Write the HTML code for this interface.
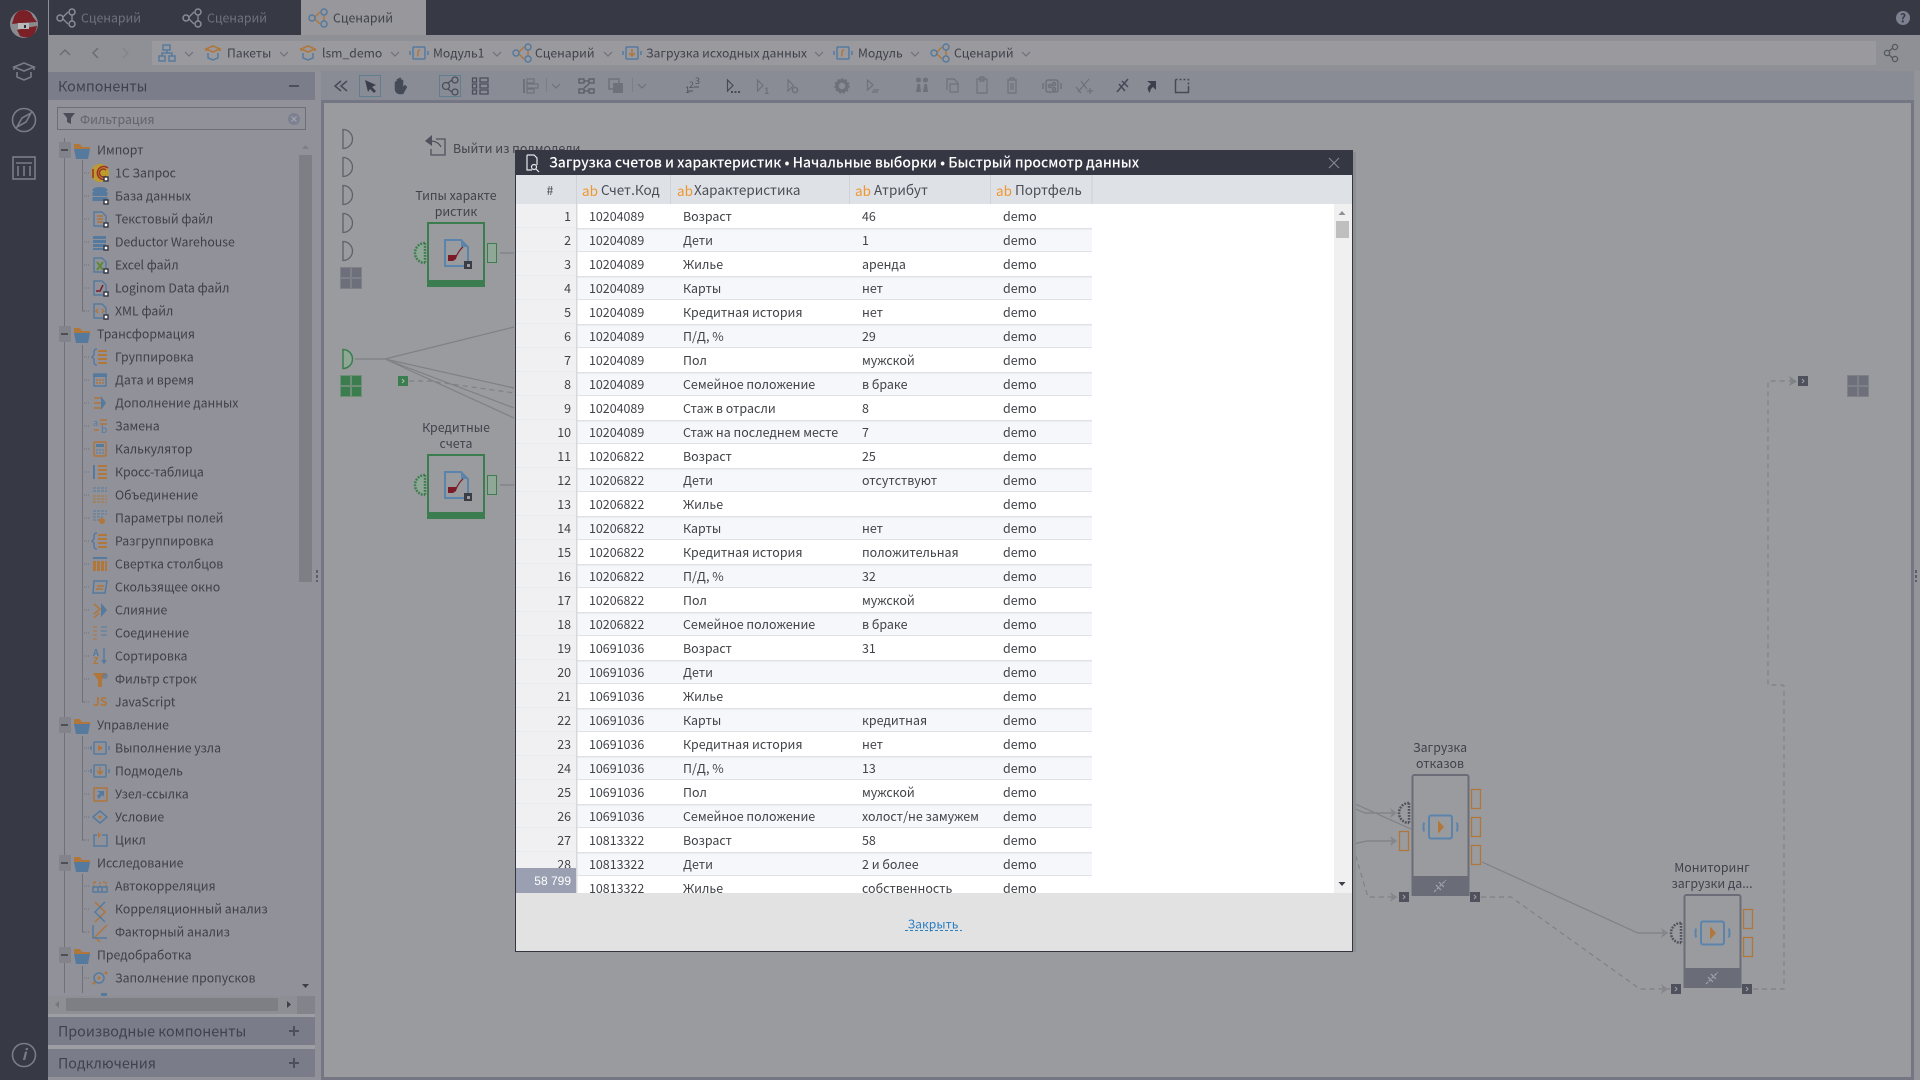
<!DOCTYPE html>
<html lang="ru"><head><meta charset="utf-8"><title>Сценарий</title>
<style>
html,body{margin:0;padding:0;width:1920px;height:1080px;overflow:hidden;background:#999b9f}
svg{display:block;position:absolute;left:0;top:0}
text{font-family:"Noto Sans CJK JP","Noto Sans CJK SC","Liberation Sans",sans-serif;font-size:12.4px;fill:#42444c}
.tab{font-size:12.3px;fill:#6f7280}
.bc{font-size:12.2px;fill:#3f414a}
.tree text{font-size:12.3px;fill:#3e4049}
.hd{font-size:14.3px;fill:#3f424e}
.tbl text{font-size:12.45px;fill:#414348}
.tbl .n{text-anchor:end}
.th{font-size:13.5px;fill:#4a4d55}
.ab{font-size:13.5px;fill:#f0962e}
.lb{font-size:12.35px;fill:#3f424c;text-anchor:middle}
.b{fill:none;stroke:#557a9e;stroke-width:1.5}
.o{fill:none;stroke:#b0763a;stroke-width:1.5}
.bf{fill:#557a9e}
.of{fill:#b0763a}
.dim{fill:none;stroke:#6f717a;stroke-width:1.5}
.dimf{fill:#6f717a}
.dk{fill:none;stroke:#454a57;stroke-width:1.5}
.lnk{fill:none;stroke:#7f8185;stroke-width:1.2}
.dsh{fill:none;stroke:#7f8185;stroke-width:1.2;stroke-dasharray:5 4}
</style></head><body>
<svg width="1920" height="1080" viewBox="0 0 1920 1080" xmlns="http://www.w3.org/2000/svg">
<defs>
<pattern id="rw" width="10" height="48" patternUnits="userSpaceOnUse" x="0" y="204"><rect width="10" height="24" fill="#fff"/><rect y="24" width="10" height="24" fill="#f6f7fa"/><rect y="24" width="10" height="1.5" fill="#dfe2e8"/><rect y="47" width="10" height="1.5" fill="#dfe2e8"/></pattern>
<pattern id="rn" width="10" height="24" patternUnits="userSpaceOnUse" x="0" y="204"><rect width="10" height="24" fill="#f0f0f2"/><rect y="23.5" width="10" height="1" fill="#dfe2e8"/></pattern>
<g id="sc"><path class="o" d="M-3-1 2-6M-3 1 2 6M6-3V3" stroke-width="1.3"/><circle cx="-6" cy="0" r="3" class="b"/><circle cx="6" cy="-6" r="3" class="b"/><circle cx="6" cy="6" r="3" class="b"/></g>
<g id="scg"><path d="M-3-1 2-6M-3 1 2 6M6-3V3" fill="none" stroke="#8a8d96" stroke-width="1.3"/><circle cx="-6" cy="0" r="3" fill="none" stroke="#8a8d96" stroke-width="1.5"/><circle cx="6" cy="-6" r="3" fill="none" stroke="#8a8d96" stroke-width="1.5"/><circle cx="6" cy="6" r="3" fill="none" stroke="#8a8d96" stroke-width="1.5"/></g>
<path id="chv" d="M-4-2 0 2 4-2" fill="none" stroke="#6f717a" stroke-width="1.2"/>
<g id="pk"><path class="o" d="M-7-4 0-7 7-4 0-1ZM-7-4-7-2M7-4 7-2"/><path class="b" d="M-5 0V5L0 7 5 5V0"/></g>
<g id="md"><rect x="-6" y="-6" width="12" height="12" rx="1" class="b"/><path class="o" d="M1-3Q-1-3-1 0T-2 3"/><path class="b" d="M-9-2V2M9-2V2"/></g>
<g id="sm"><rect x="-6" y="-6" width="12" height="12" rx="1" class="b"/><path class="o" d="M0-4V2M-3 0 0 3 3 0"/><path class="b" d="M-9-2V2M9-2V2"/></g>
<g id="fd"><path class="of" d="M-8-7H-2L0-4H8V-2H-8Z"/><path class="bf" d="M-8-2H8L6 8H-6Z"/></g>
<rect id="bd" x="4" y="4" width="4" height="4" fill="#fff" stroke="#3a3c46" stroke-width="1.5"/>
<g id="fl"><path class="b" d="M-6-7H2L6-3V7H-6Z"/></g>
<g id="exe"><rect x="-6" y="-6" width="12" height="12" rx="1" class="b"/><path class="of" d="M-2-3 3 0-2 3Z"/><path class="b" d="M-9-2V2M9-2V2"/></g>
<g id="lst"><path class="of" d="M-2-7H7V-5H-2ZM-2-3H7V-1H-2ZM-2 1H7V3H-2ZM-2 5H7V7H-2Z"/></g>
<g id="play"><rect x="-11" y="-11" width="23" height="23" rx="2" fill="none" stroke="#5b84ad" stroke-width="2"/><path d="M-2-6 4 0.5-2 7Z" fill="#b0763a"/><path d="M-16-4Q-17 .5-16 5M17-4Q18 .5 17 5" fill="none" stroke="#5b84ad" stroke-width="2"/></g>
<g id="ssq"><rect x="-5" y="-5" width="10" height="10" fill="#4f525d"/><path d="M-1-2 1 0-1 2" fill="none" stroke="#999b9f" stroke-width="1.2"/></g>
<g id="dna"><path d="M-6 6 6-6M-4-1 1 4M-1-4 4 1" fill="none" stroke="#a3a5ab" stroke-width="1.2" stroke-dasharray="3 1"/></g>
<g id="semi"><path d="M0-10A10 10 0 0 0 0 10M0-10V10" fill="none" stroke-width="2.5" stroke-dasharray="1.8 1.2"/></g>
<g id="doc"><path d="M-11-13H5L12-6V13H-11Z" fill="none" stroke="#5b84ad" stroke-width="2"/><path d="M5-13 12-6H5Z" fill="#5b84ad"/><path d="M-1 6Q3-3 7-6" fill="none" stroke="#7c1b28" stroke-width="1.2"/><path d="M-8 8V2H1L0 6-3 8Z" fill="#7c1b28"/><rect x="8" y="8" width="8" height="8" fill="#3a3c46"/><rect x="11" y="11" width="3" height="3" fill="#999b9f"/></g>
</defs>

<!-- base backgrounds -->
<rect width="1920" height="1080" fill="#8f9096"/>
<rect width="1920" height="35" fill="#373a44"/>
<rect width="48" height="1080" fill="#373a44"/>
<rect x="48" width="1" height="35" fill="#8f9096"/>
<rect x="301" width="125" height="35" fill="#97979c"/>
<use href="#scg" x="66" y="18"/><text class="tab" x="81" y="22.500">Сценарий</text>
<use href="#scg" x="192" y="18"/><text class="tab" x="207" y="22.500">Сценарий</text>
<use href="#sc" x="318" y="18"/><text class="tab" x="333" y="22.500" style="fill:#3f414a">Сценарий</text>
<circle cx="1903" cy="18" r="7" fill="#7d8090"/><text x="1903" y="22.500" text-anchor="middle" style="font-size:12px;fill:#373a44;font-weight:700">?</text>

<!-- rail -->
<circle cx="24" cy="24" r="14" fill="#8a8b8f"/>
<path d="M14 17Q17 10 24 10 31 11 33 17L37 22 21 23 12 24Z" fill="#7c2028"/>
<path d="M17 30Q24 28 37 26 36 34 30 37 24 38 20 36Z" fill="#7c2028"/>
<path d="M18 23H29V29H18Z" fill="#b9b9bb"/><rect x="24" y="25" width="2" height="3" fill="#30323a"/>
<g fill="none" stroke="#7a7d88" stroke-width="1.6"><path d="M14 67 24 63 34 67 24 71ZM14 67V70M34 67V70M17 72V77L24 80 31 77V72"/><circle cx="24" cy="120" r="11.500"/><path d="M31 113 26 122 17 127 22 118Z"/><rect x="13" y="157" width="22" height="22"/><path d="M16 163H32M18 166V176M24 166V176M30 166V176"/><circle cx="24" cy="1055" r="11.500"/></g>
<text x="24" y="1060" text-anchor="middle" style="font-size:15px;fill:#7a7d88;font-style:italic;font-weight:700">i</text>

<!-- breadcrumb -->
<rect x="48" y="35" width="1872" height="36" fill="#8f9095"/>
<rect x="152" y="41" width="1724" height="24" fill="#99999e"/>
<g fill="none" stroke="#6a6c75" stroke-width="1.5"><path d="M60 55 65 50 70 55M98 48 93 53 98 58"/><path d="M123 48 128 53 123 58" stroke="#83858b"/></g>
<g class="b"><rect x="163" y="45" width="7" height="5"/><rect x="159" y="56" width="6" height="5"/><rect x="169" y="56" width="6" height="5"/><path d="M167 50V53M162 56V53H172V56"/></g>
<use href="#chv" x="189" y="54"/>
<use href="#pk" x="213" y="53"/><text class="bc" x="227" y="57.500">Пакеты</text><use href="#chv" x="284" y="54"/>
<use href="#pk" x="308" y="53"/><text class="bc" x="322" y="57.500">lsm_demo</text><use href="#chv" x="395" y="54"/>
<use href="#md" x="419" y="53"/><text class="bc" x="433" y="57.500">Модуль1</text><use href="#chv" x="497" y="54"/>
<use href="#sc" x="522" y="53"/><text class="bc" x="535" y="57.500">Сценарий</text><use href="#chv" x="608" y="54"/>
<use href="#sm" x="632" y="53"/><text class="bc" x="646" y="57.500">Загрузка исходных данных</text><use href="#chv" x="819" y="54"/>
<use href="#md" x="843" y="53"/><text class="bc" x="858" y="57.500">Модуль</text><use href="#chv" x="915" y="54"/>
<use href="#sc" x="940" y="53"/><text class="bc" x="954" y="57.500">Сценарий</text><use href="#chv" x="1026" y="54"/>
<g fill="none" stroke="#55575f" stroke-width="1.3"><circle cx="1887" cy="53" r="2.600"/><circle cx="1895" cy="47" r="2.600"/><circle cx="1895" cy="59" r="2.600"/><path d="M1889 51 1893 48M1889 55 1893 58"/></g>

<!-- left panel -->
<rect x="48" y="72" width="267" height="1008" fill="#91919a"/>
<rect x="48" y="72" width="267" height="28" fill="#7b7e8a"/>
<text class="hd" x="58" y="91.500">Компоненты</text>
<rect x="289" y="85" width="10" height="2" fill="#4d505c"/>
<rect x="57.500" y="107.500" width="248" height="22" fill="#91919a" stroke="#6d6e76"/>
<path d="M63 113H75L71 118V124L67 122V118Z" fill="#4a4d58"/>
<text x="80" y="124" style="fill:#62646c">Фильтрация</text>
<circle cx="294" cy="119" r="6" fill="#7c8090"/><path d="M291.500 116.500 296.500 121.500M296.500 116.500 291.500 121.500" stroke="#a3a5ae" stroke-width="1.2"/>

<!-- tree -->
<g class="tree">
<path d="M64.500 138V993M82.500 160V311H85M82.500 345V702H85M82.500 736V840H85M82.500 874V932H85M82.500 966V993" fill="none" stroke="#6f7078"/>
<g fill="#82838b"><rect x="59" y="142" width="12" height="16" rx="1"/><rect x="59" y="326" width="12" height="16" rx="1"/><rect x="59" y="717" width="12" height="16" rx="1"/><rect x="59" y="855" width="12" height="16" rx="1"/><rect x="59" y="947" width="12" height="16" rx="1"/></g>
<g fill="#4e5058"><rect x="61" y="149" width="7" height="2"/><rect x="61" y="333" width="7" height="2"/><rect x="61" y="724" width="7" height="2"/><rect x="61" y="862" width="7" height="2"/><rect x="61" y="954" width="7" height="2"/></g>
<g fill="none" stroke="#6f7078" stroke-dasharray="1 1"><path d="M84 173H89M84 196H89M84 219H89M84 242H89M84 265H89M84 288H89M84 311H89M84 357H89M84 380H89M84 403H89M84 426H89M84 449H89M84 472H89M84 495H89M84 518H89M84 541H89M84 564H89M84 587H89M84 610H89M84 633H89M84 656H89M84 679H89M84 702H89M84 748H89M84 771H89M84 794H89M84 817H89M84 840H89M84 886H89M84 909H89M84 932H89M84 978H89"/></g>

<use href="#fd" x="82" y="151"/><text x="97" y="154.500">Импорт</text>
<circle cx="100" cy="173" r="9" fill="#bd9b2e"/><path d="M93 169V178M106 170A4 4 0 1 0 106 176M108 168A6.500 6.500 0 1 0 108 178" fill="none" stroke="#9c2f28" stroke-width="1.5"/><use href="#bd" x="100" y="173"/><text x="115" y="177.500">1С Запрос</text>
<g class="bf"><ellipse cx="100" cy="190" rx="7.500" ry="3"/><rect x="92.500" y="192" width="15" height="4"/><rect x="92.500" y="197" width="15" height="4"/></g><use href="#bd" x="100" y="196"/><text x="115" y="200.500">База данных</text>
<use href="#fl" x="100" y="219"/><path class="o" d="M97 216H103M97 219H103M97 222H103"/><use href="#bd" x="100" y="219"/><text x="115" y="223.500">Текстовый файл</text>
<g class="bf"><rect x="93" y="236" width="13" height="3"/><rect x="93" y="240" width="13" height="3"/><rect x="93" y="244" width="13" height="3"/><rect x="93" y="248" width="13" height="2"/></g><use href="#bd" x="100" y="242"/><text x="115" y="246.500">Deductor Warehouse</text>
<use href="#fl" x="100" y="265"/><path d="M97 262 103 270M103 262 97 270" stroke="#5d8a3a" stroke-width="2"/><use href="#bd" x="100" y="265"/><text x="115" y="269.500">Excel файл</text>
<use href="#fl" x="100" y="288"/><path d="M96 291H100L103 285" fill="none" stroke="#7c1b28" stroke-width="1.500"/><use href="#bd" x="100" y="288"/><text x="115" y="292.500">Loginom Data файл</text>
<use href="#fl" x="100" y="311"/><path class="o" d="M98 309 96 311 98 313M102 309 104 311 102 313"/><use href="#bd" x="100" y="311"/><text x="115" y="315.500">XML файл</text>

<use href="#fd" x="82" y="335"/><text x="97" y="338.500">Трансформация</text>
<path class="b" d="M97 349Q94 349 94 352V355L92 357 94 359V362Q94 365 97 365"/><use href="#lst" x="100" y="357"/><text x="115" y="361.500">Группировка</text>
<rect x="94" y="374" width="12" height="12" class="b"/><path class="bf" d="M93 374H107V377H93Z"/><path class="o" d="M96 380H98M99 380H101M102 380H104M96 383H98M99 383H101M102 383H104"/><text x="115" y="384.500">Дата и время</text>
<path class="o" d="M94 398H101M94 403H101M94 408H101"/><path class="bf" d="M101 396 106 403 101 410Z"/><text x="115" y="407.500">Дополнение данных</text>
<text x="93" y="426" style="font-size:9px;fill:#557a9e">a</text><text x="101" y="433" style="font-size:10px;fill:#557a9e">b</text><path class="o" d="M100 420H107M100 424H107M94 430H99"/><text x="115" y="430.500">Замена</text>
<rect x="94" y="442" width="12" height="14" rx="1" class="o"/><path class="bf" d="M96 444H104V447H96Z"/><path d="M96 450H104M96 453H104" stroke="#557a9e" stroke-dasharray="2 1"/><text x="115" y="453.500">Калькулятор</text>
<rect x="93" y="465" width="2" height="14" class="bf"/><use href="#lst" x="100" y="472"/><text x="115" y="476.500">Кросс-таблица</text>
<path d="M93 488H107M93 491H107" stroke="#557a9e" stroke-dasharray="3 1" fill="none"/><path d="M93 496H107M93 499H107M93 502H107" stroke="#b0763a" stroke-dasharray="3 1" fill="none"/><text x="115" y="499.500">Объединение</text>
<path d="M93 511H107M93 514H107M93 517H103M93 520H103" stroke="#557a9e" stroke-dasharray="3 1" fill="none"/><circle cx="102" cy="521" r="3" class="of"/><text x="115" y="522.500">Параметры полей</text>
<path class="b" d="M97 533Q94 533 94 536V539L92 541 94 543V546Q94 549 97 549"/><use href="#lst" x="100" y="541"/><text x="115" y="545.500">Разгруппировка</text>
<rect x="93" y="557" width="14" height="2" class="bf"/><path class="of" d="M93 561H96V571H93ZM97 561H100V571H97ZM101 561H104V571H101ZM105 561H107V571H105Z"/><text x="115" y="568.500">Свертка столбцов</text>
<path class="b" d="M94 581H107L105 593H93Z"/><path class="o" d="M97 586H104M96 589H103"/><text x="115" y="591.500">Скользящее окно</text>
<path class="o" d="M94 604 100 609 94 614M94 618 99 613"/><path class="bf" d="M101 603 107 610 101 617Z"/><text x="115" y="614.500">Слияние</text>
<path d="M93 627H97M93 631H97M93 635H97M93 639H97" stroke="#b0763a" fill="none"/><path d="M101 627H107M101 631H107M101 635H107" stroke="#557a9e" fill="none"/><text x="115" y="637.500">Соединение</text>
<text x="93" y="656" style="font-size:9px;font-weight:700;fill:#557a9e">A</text><text x="93" y="664" style="font-size:9px;font-weight:700;fill:#b0763a">Z</text><path class="b" d="M104 648V662M102 660 104 663 106 660"/><text x="115" y="660.500">Сортировка</text>
<path class="of" d="M93 673H107L102 680V687H98V680Z"/><circle cx="105" cy="676" r="3" class="bf" fill-opacity=".6"/><text x="115" y="683.500">Фильтр строк</text>
<text x="93" y="706" style="font-size:12px;font-weight:700;fill:#b0763a">JS</text><text x="115" y="706.500">JavaScript</text>

<use href="#fd" x="82" y="726"/><text x="97" y="729.500">Управление</text>
<use href="#exe" x="100" y="748"/><text x="115" y="752.500">Выполнение узла</text>
<use href="#sm" x="100" y="771"/><text x="115" y="775.500">Подмодель</text>
<rect x="94" y="788" width="13" height="13" class="o"/><path class="bf" d="M97 791H104V797L102 795 99 799 97 796 100 793Z"/><text x="115" y="798.500">Узел-ссылка</text>
<path class="b" d="M93 817 100 811 107 817 100 823Z"/><circle cx="100" cy="817" r="1.500" class="of"/><text x="115" y="821.500">Условие</text>
<path class="b" d="M102 835H107V846H94V835H97"/><path class="of" d="M98 832 101 835 98 838Z"/><text x="115" y="844.500">Цикл</text>

<use href="#fd" x="82" y="864"/><text x="97" y="867.500">Исследование</text>
<path class="o" d="M94 882V888M94 882H97M100 882V888M103 882H106V888" stroke-dasharray="2 1"/><path class="b" d="M93 887H107V892H93ZM98 887V892M102 887V892"/><text x="115" y="890.500">Автокорреляция</text>
<path class="o" d="M95 902 105 912 95 922" stroke-width="2.500"/><path class="b" d="M105 902 95 912 105 922" stroke-width="2.500"/><text x="115" y="913.500">Корреляционный анализ</text>
<path class="o" d="M107 925 95 937 100 942"/><path class="b" d="M93 925V938H107" stroke-width="2"/><text x="115" y="936.500">Факторный анализ</text>

<use href="#fd" x="82" y="956"/><text x="97" y="959.500">Предобработка</text>
<circle cx="99" cy="978" r="5" class="b"/><circle cx="99" cy="978" r="1.500" class="of"/><circle cx="106" cy="973" r="1.500" class="of"/><circle cx="94" cy="983" r="1.500" class="of"/><text x="115" y="982.500">Заполнение пропусков</text>
<rect x="101" y="993" width="6" height="3" class="bf"/>
</g>

<!-- panel scrollbars -->
<rect x="299" y="155" width="13" height="427" fill="#7e7f84"/>
<path d="M302 149 305.500 145 309 149Z" fill="#7e7f84"/>
<path d="M302 984H309L305.500 988Z" fill="#3e4048"/>
<rect x="48" y="996" width="267" height="18" fill="#8e8e95"/>
<rect x="66" y="998" width="212" height="13" fill="#7e7f84"/>
<path d="M59 1001V1008L55 1004.500Z" fill="#76777d"/><path d="M287 1001V1008L291 1004.500Z" fill="#3e4048"/>
<rect x="297" y="996" width="18" height="18" fill="#83848b"/>
<rect x="48" y="1014" width="267" height="3" fill="#9d9da4"/>
<rect x="48" y="1017" width="267" height="28" fill="#7a7d89"/>
<rect x="48" y="1045" width="267" height="4" fill="#9d9da4"/>
<rect x="48" y="1049" width="267" height="28" fill="#7a7d89"/>
<text class="hd" x="58" y="1036.500">Производные компоненты</text>
<text class="hd" x="58" y="1068.500">Подключения</text>
<path d="M294 1026V1036M289 1031H299M294 1058V1068M289 1063H299" stroke="#4d505c" stroke-width="2"/>

<!-- splitter + canvas -->
<rect x="315" y="71" width="6" height="1009" fill="#91919a"/>
<path d="M317 570V573M317 575V578M317 580V582" stroke="#4a4c54" stroke-width="1.5"/>
<rect x="321" y="71" width="1593" height="29" fill="#8a8c95"/>
<rect x="321" y="100" width="1593" height="980" fill="#747683"/>
<rect x="324" y="103" width="1587" height="974" fill="#999b9f"/>
<rect x="1914" y="71" width="6" height="1009" fill="#93939a"/>
<path d="M1916 570V573M1916 575V578M1916 580V582" stroke="#4a4c54" stroke-width="1.5"/>

<!-- toolbar -->
<path d="M341 81 335 86 341 91M347 81 341 86 347 91" fill="none" stroke="#454a57" stroke-width="1.500"/>
<rect x="359.500" y="75.500" width="21" height="21" fill="none" stroke="#5f7f8f"/>
<path d="M365 80 376 85 372 87 376 91 374 93 370 89 368 92Z" fill="#3b3f4b"/>
<path d="M395 82V90Q396 94 400 94H403L407 87 405 85 403 87V80H401V85 78H399V85 79H397V85 81Z" fill="#454a57" stroke="#454a57" stroke-width=".5"/>
<rect x="439.500" y="75.500" width="21" height="21" fill="none" stroke="#5f7f8f"/>
<g fill="none" stroke="#4a4e5b" stroke-width="1.300"><circle cx="446" cy="86" r="3.500"/><circle cx="455" cy="80" r="3"/><circle cx="455" cy="92" r="3"/><path d="M448 83 452 80M448 89 452 92"/><path d="M472.500 79h4v4h-4zM472.500 85h4v4h-4zM472.500 91h4v4h-4zM480 79h8v4h-8zM480 85h8v4h-8zM480 91h8v4h-8z" transform="translate(0 -1)"/></g>
<rect x="523" y="79" width="2" height="14" class="dimf"/><rect x="527" y="79" width="7" height="4" class="dim" style="stroke-width:1.2"/><rect x="527" y="84" width="11" height="4" class="dim" style="stroke-width:1.2"/><rect x="527" y="89" width="7" height="4" class="dim" style="stroke-width:1.2"/>
<path d="M546.500 78V92M632.500 78V92" stroke="#7c7e87"/><use href="#chv" x="556" y="86"/><use href="#chv" x="642" y="86"/>
<g fill="none" stroke="#585b66" stroke-width="1.300"><rect x="579" y="79" width="5" height="4"/><rect x="589" y="79" width="5" height="4"/><rect x="579" y="89" width="5" height="4"/><rect x="589" y="89" width="5" height="4"/><path d="M584 81H589M584 91H589M589 84 584 88"/></g>
<rect x="609" y="79" width="10" height="10" fill="none" stroke="#6f717a" stroke-width="1.500"/><rect x="613" y="83" width="10" height="10" fill="#6f717a"/>
<text x="685" y="93" style="font-size:9px;fill:#50535e">1</text><text x="689" y="88" style="font-size:9px;fill:#50535e">2</text><text x="695" y="84" style="font-size:9px;fill:#50535e">3</text>
<path d="M688 91H693M694 87H699" stroke="#50535e" fill="none"/>
<path d="M727.500 80V91L733 85.500Z" fill="none" stroke="#474a56" stroke-width="1.200"/><path d="M731 91h2v2h-2zM734.500 91h2v2h-2zM738 91h2v2h-2z" fill="#474a56"/>
<path d="M757.500 80V91L763 85.500Z" fill="none" stroke="#6f717a" stroke-width="1.200"/><text x="764" y="94" style="font-size:9px;font-weight:700;fill:#6f717a">1</text>
<path d="M788 80V91L793.500 85.500Z" fill="none" stroke="#6f717a" stroke-width="1.200"/><circle cx="795" cy="90" r="2.600" class="dim"/>
<circle cx="842" cy="86" r="5" fill="none" stroke="#6f717a" stroke-width="3.500"/><circle cx="842" cy="86" r="7" fill="none" stroke="#6f717a" stroke-width="1.500" stroke-dasharray="2 2"/>
<path d="M867.500 80V90L873 85ZM873 90H879M872 92H878" fill="none" stroke="#6f717a" stroke-width="1.200"/>
<g class="dimf"><circle cx="918.500" cy="80" r="2.500"/><circle cx="925.500" cy="80" r="2.500"/><path d="M916 92 917.500 84H920L921 92ZM923 92 924.500 84H927L928 92Z"/></g>
<path d="M947 90V79H954L958 83V92H950V84H958" fill="none" stroke="#6f717a" stroke-width="1.200"/>
<path d="M977 79H987V93H977ZM980 77H984V81H980Z" fill="none" stroke="#6f717a" stroke-width="1.200"/>
<path d="M1007 80H1017M1010 80V78H1014V80M1008 80V93H1016V80M1011 83V90M1013 83V90" fill="none" stroke="#6f717a" stroke-width="1.200"/>
<rect x="1046" y="80" width="12" height="12" rx="2" class="dim"/><path d="M1043 83V89M1061 83V89" class="dim"/><circle cx="1050" cy="86" r="1.500" class="dim"/><circle cx="1054" cy="84" r="1.500" class="dim"/><circle cx="1054" cy="89" r="1.500" class="dim"/>
<path d="M1078 92 1089 79M1081 81 1087 89M1076 87 1081 93M1087 91H1093M1090 88V94" fill="none" stroke="#6f717a" stroke-width="1.200"/>
<path d="M1117 92 1128 79M1119 84 1125 91M1122 81 1128 87" class="dk"/>
<path d="M1147 81H1156V90L1153 87Q1150 89 1150 93 1145 88 1151 84Z" fill="#3d404c"/>
<path d="M1175.500 79.500V92.500H1188.500V86" class="dk"/><path d="M1175.500 79.500H1188.500V86" fill="none" stroke="#454a57" stroke-width="1.500" stroke-dasharray="2 2"/>

<!-- canvas left -->
<g fill="none" stroke="#5f616a" stroke-width="1.300"><path d="M343 129.500A9.500 9.500 0 0 1 343 148.500ZM343 157.500A9.500 9.500 0 0 1 343 176.500ZM343 185.500A9.500 9.500 0 0 1 343 204.500ZM343 213.500A9.500 9.500 0 0 1 343 232.500ZM343 241.500A9.500 9.500 0 0 1 343 260.500Z"/></g>
<g fill="#6d6f7b" stroke="#7f8189"><rect x="340.500" y="267.500" width="10" height="10"/><rect x="351.500" y="267.500" width="10" height="10"/><rect x="340.500" y="278.500" width="10" height="10"/><rect x="351.500" y="278.500" width="10" height="10"/></g>
<path d="M343 349.500A9.500 9.500 0 0 1 343 368.500Z" fill="#8ea895" stroke="#3b7d4e" stroke-width="1.500"/>
<g fill="#3b7d4e" stroke="#6f8f78"><rect x="340.500" y="375.500" width="10" height="10"/><rect x="351.500" y="375.500" width="10" height="10"/><rect x="340.500" y="386.500" width="10" height="10"/><rect x="351.500" y="386.500" width="10" height="10"/></g>
<rect x="398" y="376" width="10" height="10" fill="#3b7d4e"/><path d="M402 379 404 381 402 383" fill="none" stroke="#9fb8a6" stroke-width="1.200"/>
<path class="lnk" d="M355 359H385L514 327M385 359 514 388M385 359 514 408M385 359 514 418"/>
<path class="dsh" d="M409 381H430L514 393"/>
<path class="lnk" d="M500 253H514M500 485H514"/>
<path d="M425 141 432 135V146Z" fill="#4f525d"/><path d="M430 141Q438 141 441 147" fill="none" stroke="#4f525d" stroke-width="1.300"/><path d="M436 139H445V155H431V149" fill="none" stroke="#4f525d" stroke-width="1.300"/>
<text x="453" y="153" style="fill:#41434c">Выйти из подмодели</text>

<text class="lb" x="456" y="200">Типы характе</text><text class="lb" x="456" y="216">ристик</text>
<rect x="428" y="223" width="56" height="63" fill="#999b9f" stroke="#3b7d4e" stroke-width="2"/><rect x="427" y="280" width="58" height="7" fill="#3b7d4e"/>
<use href="#doc" x="456" y="253"/>
<path d="M424 244A9 9 0 0 0 424 262Z" fill="#8ea895"/><use href="#semi" x="425" y="253" stroke="#3b7d4e"/>
<rect x="487.500" y="243.500" width="9" height="19" fill="#8ea895" stroke="#3b7d4e"/>

<text class="lb" x="456" y="432">Кредитные</text><text class="lb" x="456" y="448">счета</text>
<rect x="428" y="455" width="56" height="63" fill="#999b9f" stroke="#3b7d4e" stroke-width="2"/><rect x="427" y="512" width="58" height="7" fill="#3b7d4e"/>
<use href="#doc" x="456" y="485"/>
<path d="M424 476A9 9 0 0 0 424 494Z" fill="#8ea895"/><use href="#semi" x="425" y="485" stroke="#3b7d4e"/>
<rect x="487.500" y="475.500" width="9" height="19" fill="#8ea895" stroke="#3b7d4e"/>

<!-- canvas right -->
<path class="dsh" d="M1753 989H1784V686L1783 685H1768V381H1792"/>
<path d="M1789 376 1797 381.500 1789 386 1791 381.500Z" fill="#7f8185"/>
<use href="#ssq" x="1803" y="381"/>
<g fill="#6d6f7b" stroke="#7f8189"><rect x="1847.500" y="375.500" width="10" height="10"/><rect x="1858.500" y="375.500" width="10" height="10"/><rect x="1847.500" y="386.500" width="10" height="10"/><rect x="1858.500" y="386.500" width="10" height="10"/></g>

<path class="lnk" d="M1353 803 1411 829M1482 862 1638 933H1668M1353 808 1365 813H1395M1353 844 1367 841H1395"/>
<path class="dsh" d="M1353 847 1368 897H1397M1481 897H1511L1640 989H1670"/>
<g fill="#84868a"><path d="M1390 808 1397 813 1390 818 1392 813ZM1390 836 1397 841 1390 846 1392 841ZM1390 892 1397 897 1390 902 1392 897ZM1661 928 1668 933 1661 938 1663 933ZM1661 984 1668 989 1661 994 1663 989Z"/></g>

<text class="lb" x="1440" y="752">Загрузка</text><text class="lb" x="1440" y="768">отказов</text>
<rect x="1412.500" y="775" width="56" height="120" rx="2" fill="#999b9f" stroke="#6a6c78" stroke-width="2"/>
<rect x="1411.500" y="876" width="58" height="20" fill="#6a6c78"/><use href="#dna" x="1440" y="886"/>
<use href="#play" x="1440" y="826.500"/>
<use href="#semi" x="1409" y="813" stroke="#50525c"/>
<g fill="none" stroke="#b0763a" stroke-width="1.300"><rect x="1399.500" y="831.500" width="9" height="19"/><rect x="1471.500" y="789.500" width="9" height="19"/><rect x="1471.500" y="817.500" width="9" height="19"/><rect x="1471.500" y="845.500" width="9" height="19"/></g>
<use href="#ssq" x="1404" y="897"/><use href="#ssq" x="1475" y="897"/>

<text class="lb" x="1712" y="872">Мониторинг</text><text class="lb" x="1712" y="888">загрузки да...</text>
<rect x="1684.500" y="895" width="56" height="92" rx="2" fill="#999b9f" stroke="#6a6c78" stroke-width="2"/>
<rect x="1683.500" y="968" width="58" height="20" fill="#6a6c78"/><use href="#dna" x="1712" y="978"/>
<use href="#play" x="1712" y="932.500"/>
<use href="#semi" x="1681" y="933" stroke="#50525c"/>
<g fill="none" stroke="#b0763a" stroke-width="1.300"><rect x="1743.500" y="909.500" width="9" height="19"/><rect x="1743.500" y="937.500" width="9" height="19"/></g>
<use href="#ssq" x="1676" y="989"/><use href="#ssq" x="1747" y="989"/>

<!-- modal -->
<rect x="515" y="150" width="838" height="802" fill="#33363f"/>
<rect x="1353" y="152" width="3" height="800" fill="#8d8f94"/>
<rect x="516" y="175" width="836" height="776" fill="#fff"/>
<rect x="515" y="150" width="838" height="25" fill="#353843"/>
<path d="M527 155H534L537 158V165M527 155V170H532" fill="none" stroke="#e8e8ea" stroke-width="1.200"/><circle cx="534" cy="167" r="2.500" fill="none" stroke="#e8e8ea" stroke-width="1.200"/><path d="M536 169 539 172" stroke="#e8e8ea" stroke-width="1.200"/>
<text x="549" y="167.500" style="font-size:14px;font-weight:500;fill:#fff">Загрузка счетов и характеристик • Начальные выборки • Быстрый просмотр данных</text>
<path d="M1329 158 1339 168M1339 158 1329 168" stroke="#8a8c95" stroke-width="1"/>

<rect x="516" y="175" width="836" height="29" fill="#dee1e6"/>
<path d="M576.500 175V204M670.500 175V204M849.500 175V204M990.500 175V204M1092 175V204" stroke="#cfd2d8"/>
<text x="550" y="195" text-anchor="middle" style="fill:#4a4d55">#</text>
<text class="ab" x="582" y="196">ab</text><text class="th" x="601" y="195">Счет.Код</text>
<text class="ab" x="677" y="196">ab</text><text class="th" x="694" y="195">Характеристика</text>
<text class="ab" x="855" y="196">ab</text><text class="th" x="874" y="195">Атрибут</text>
<text class="ab" x="996" y="196">ab</text><text class="th" x="1015" y="195">Портфель</text>

<rect x="516" y="204" width="60" height="689" fill="url(#rn)"/>
<rect x="576" y="204" width="516" height="689" fill="url(#rw)"/>
<rect x="576" y="204" width="1.500" height="689" fill="#d5d8de"/>
<rect x="1334" y="204" width="18" height="689" fill="#f0f0f0"/>
<rect x="1336" y="221" width="13" height="17" fill="#bfbfbf"/>
<path d="M1338.500 215 1342 211 1345.500 215Z" fill="#8f9095"/>
<path d="M1338.500 882H1345.500L1342 886Z" fill="#3e4048"/>

<g class="tbl">
<text class="n" x="571" y="221">1</text><text x="589" y="221">10204089</text><text x="683" y="221">Возраст</text><text x="862" y="221">46</text><text x="1003" y="221">demo</text>
<text class="n" x="571" y="245">2</text><text x="589" y="245">10204089</text><text x="683" y="245">Дети</text><text x="862" y="245">1</text><text x="1003" y="245">demo</text>
<text class="n" x="571" y="269">3</text><text x="589" y="269">10204089</text><text x="683" y="269">Жилье</text><text x="862" y="269">аренда</text><text x="1003" y="269">demo</text>
<text class="n" x="571" y="293">4</text><text x="589" y="293">10204089</text><text x="683" y="293">Карты</text><text x="862" y="293">нет</text><text x="1003" y="293">demo</text>
<text class="n" x="571" y="317">5</text><text x="589" y="317">10204089</text><text x="683" y="317">Кредитная история</text><text x="862" y="317">нет</text><text x="1003" y="317">demo</text>
<text class="n" x="571" y="341">6</text><text x="589" y="341">10204089</text><text x="683" y="341">П/Д, %</text><text x="862" y="341">29</text><text x="1003" y="341">demo</text>
<text class="n" x="571" y="365">7</text><text x="589" y="365">10204089</text><text x="683" y="365">Пол</text><text x="862" y="365">мужской</text><text x="1003" y="365">demo</text>
<text class="n" x="571" y="389">8</text><text x="589" y="389">10204089</text><text x="683" y="389">Семейное положение</text><text x="862" y="389">в браке</text><text x="1003" y="389">demo</text>
<text class="n" x="571" y="413">9</text><text x="589" y="413">10204089</text><text x="683" y="413">Стаж в отрасли</text><text x="862" y="413">8</text><text x="1003" y="413">demo</text>
<text class="n" x="571" y="437">10</text><text x="589" y="437">10204089</text><text x="683" y="437">Стаж на последнем месте</text><text x="862" y="437">7</text><text x="1003" y="437">demo</text>
<text class="n" x="571" y="461">11</text><text x="589" y="461">10206822</text><text x="683" y="461">Возраст</text><text x="862" y="461">25</text><text x="1003" y="461">demo</text>
<text class="n" x="571" y="485">12</text><text x="589" y="485">10206822</text><text x="683" y="485">Дети</text><text x="862" y="485">отсутствуют</text><text x="1003" y="485">demo</text>
<text class="n" x="571" y="509">13</text><text x="589" y="509">10206822</text><text x="683" y="509">Жилье</text><text x="1003" y="509">demo</text>
<text class="n" x="571" y="533">14</text><text x="589" y="533">10206822</text><text x="683" y="533">Карты</text><text x="862" y="533">нет</text><text x="1003" y="533">demo</text>
<text class="n" x="571" y="557">15</text><text x="589" y="557">10206822</text><text x="683" y="557">Кредитная история</text><text x="862" y="557">положительная</text><text x="1003" y="557">demo</text>
<text class="n" x="571" y="581">16</text><text x="589" y="581">10206822</text><text x="683" y="581">П/Д, %</text><text x="862" y="581">32</text><text x="1003" y="581">demo</text>
<text class="n" x="571" y="605">17</text><text x="589" y="605">10206822</text><text x="683" y="605">Пол</text><text x="862" y="605">мужской</text><text x="1003" y="605">demo</text>
<text class="n" x="571" y="629">18</text><text x="589" y="629">10206822</text><text x="683" y="629">Семейное положение</text><text x="862" y="629">в браке</text><text x="1003" y="629">demo</text>
<text class="n" x="571" y="653">19</text><text x="589" y="653">10691036</text><text x="683" y="653">Возраст</text><text x="862" y="653">31</text><text x="1003" y="653">demo</text>
<text class="n" x="571" y="677">20</text><text x="589" y="677">10691036</text><text x="683" y="677">Дети</text><text x="1003" y="677">demo</text>
<text class="n" x="571" y="701">21</text><text x="589" y="701">10691036</text><text x="683" y="701">Жилье</text><text x="1003" y="701">demo</text>
<text class="n" x="571" y="725">22</text><text x="589" y="725">10691036</text><text x="683" y="725">Карты</text><text x="862" y="725">кредитная</text><text x="1003" y="725">demo</text>
<text class="n" x="571" y="749">23</text><text x="589" y="749">10691036</text><text x="683" y="749">Кредитная история</text><text x="862" y="749">нет</text><text x="1003" y="749">demo</text>
<text class="n" x="571" y="773">24</text><text x="589" y="773">10691036</text><text x="683" y="773">П/Д, %</text><text x="862" y="773">13</text><text x="1003" y="773">demo</text>
<text class="n" x="571" y="797">25</text><text x="589" y="797">10691036</text><text x="683" y="797">Пол</text><text x="862" y="797">мужской</text><text x="1003" y="797">demo</text>
<text class="n" x="571" y="821">26</text><text x="589" y="821">10691036</text><text x="683" y="821">Семейное положение</text><text x="862" y="821">холост/не замужем</text><text x="1003" y="821">demo</text>
<text class="n" x="571" y="845">27</text><text x="589" y="845">10813322</text><text x="683" y="845">Возраст</text><text x="862" y="845">58</text><text x="1003" y="845">demo</text>
<text class="n" x="571" y="869">28</text><text x="589" y="869">10813322</text><text x="683" y="869">Дети</text><text x="862" y="869">2 и более</text><text x="1003" y="869">demo</text>
<text x="589" y="893">10813322</text><text x="683" y="893">Жилье</text><text x="862" y="893">собственность</text><text x="1003" y="893">demo</text>
</g>
<rect x="516" y="868" width="60" height="25" fill="#9aa0b1"/>
<text x="571" y="885" text-anchor="end" style="font-family:'Liberation Sans',sans-serif;font-size:12px;fill:#fff">58 799</text>
<rect x="516" y="893" width="836" height="58" fill="#e2e2e2"/>
<text x="933" y="928.500" text-anchor="middle" style="font-size:12.2px;fill:#2b7fc4">Закрыть</text>
<path d="M905 930.500H962" stroke="#2b7fc4" stroke-dasharray="3 2"/>
</svg>
</body></html>
